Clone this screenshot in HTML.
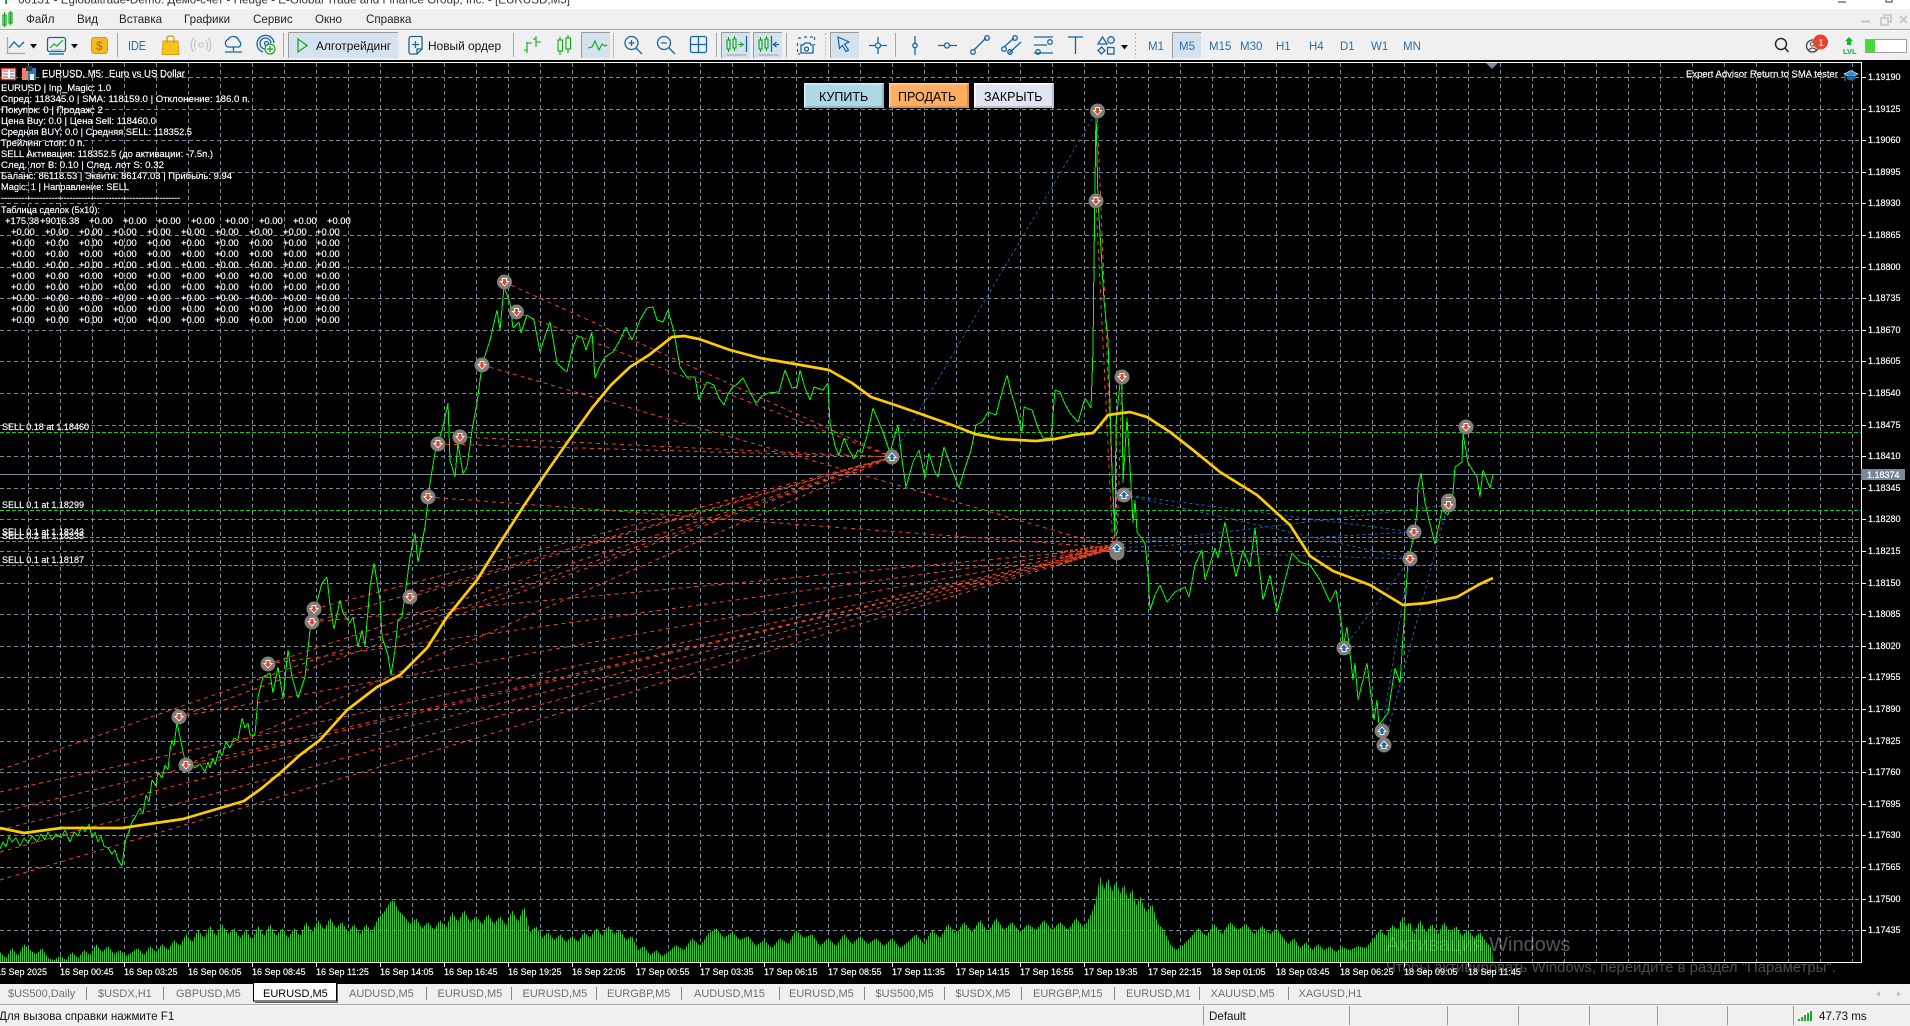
<!DOCTYPE html>
<html><head><meta charset="utf-8"><title>EURUSD,M5</title>
<style>
html,body{margin:0;padding:0;background:#000;width:1910px;height:1026px;overflow:hidden}
svg{display:block;position:absolute;left:0;top:0}
text{font-family:"Liberation Sans","Noto Sans CJK SC",sans-serif;white-space:pre}
.c text,text.c{font-size:9px;fill:#fff;stroke:#fff;stroke-width:.15}
.i{font-size:9.4px;fill:#fff;stroke:#fff;stroke-width:.15}
.t{font-size:11px;fill:#6e6e6e}
.m{font-size:11.6px;fill:#222}
.tf{font-size:11.5px;fill:#2c6fa6}
.ib{fill:none;stroke:#17669f;stroke-width:1.3}
.ig{fill:none;stroke:#0fa31e;stroke-width:1.1}
.sep{stroke:#a8a8a8;stroke-width:1}
</style></head><body>
<svg width="1910" height="1026" viewBox="0 0 1910 1026" xmlns="http://www.w3.org/2000/svg">
<defs>
<pattern id="vb" patternUnits="userSpaceOnUse" x="0" y="0" width="2" height="4"><rect width="1" height="4" fill="#32cd32"/></pattern>
<g id="sm"><circle r="7.5" fill="#847d78"/><path d="M-2-3.500H2V-.5H4L0 4-4-.5H-2Z" fill="#e8432a" stroke="#fff" stroke-width=".9"/></g>
<g id="bm"><circle r="7.5" fill="#847d78"/><path d="M-2 3.500H2V.5H4L0-4-4 .5H-2Z" fill="#0f6cb4" stroke="#fff" stroke-width=".9"/></g>
</defs>

<!-- window chrome -->
<rect x="0" y="0" width="1910" height="9" fill="#fff"/>
<rect x="0" y="9" width="1910" height="51" fill="#f0f0f0"/>
<rect x="0" y="29" width="1910" height="1" fill="#a6a6a6"/>
<rect x="0" y="30" width="1910" height="1" fill="#fafafa"/>
<rect x="0" y="60" width="1910" height="966" fill="#000"/>
<path d="M5 0h2v4H5z" fill="#1fa82f"/>
<text x="18" y="3.500" textLength="552" lengthAdjust="spacingAndGlyphs" style="font-size:12px;fill:#333">60131 - Eglobaltrade-Demo: Демо-счет - Hedge - E-Global Trade and Finance Group, Inc. - [EURUSD,M5]</text>
<path d="M1838 2h8M1886 0v2h6V0" stroke="#333" fill="none"/>

<!-- menu -->
<path d="M3 15h3v10H3zM9 13h3v10H9z" fill="none" stroke="#12a822" stroke-width="1.2"/><path d="M4.500 12v15M10.500 11v14" stroke="#12a822"/>
<g class="mn"><text class="m" x="26" y="23">Файл</text><text class="m" x="77" y="23">Вид</text><text class="m" x="119" y="23">Вставка</text><text class="m" x="184" y="23">Графики</text><text class="m" x="253" y="23">Сервис</text><text class="m" x="315" y="23">Окно</text><text class="m" x="366" y="23">Справка</text></g>
<path d="M1861 21.500h9" stroke="#c4c4c4" stroke-width="2"/><path d="M1881 18h7v7h-7zM1884 18v-3h7v7h-3" fill="none" stroke="#c4c4c4" stroke-width="1.5"/><path d="M1900 16l7 7M1907 16l-7 7" stroke="#c4c4c4" stroke-width="1.6"/>

<!-- toolbar highlights -->
<g fill="#d5e3f0"><rect x="289" y="33" width="109" height="25"/><rect x="582" y="33" width="28" height="25"/><rect x="722" y="33" width="28" height="25"/><rect x="754" y="33" width="28" height="25"/><rect x="831" y="33" width="28" height="25"/><rect x="1173" y="33" width="28" height="25"/></g>
<path d="M288.500 32.500H398M288.500 32.500V58M581.500 32.500H610M581.500 32.500V58M721.500 32.500H750M721.500 32.500V58M753.500 32.500H782M753.500 32.500V58M830.500 32.500H859M830.500 32.500V58M1172.500 32.500H1201M1172.500 32.500V58" stroke="#9c9c9c" fill="none"/>
<g class="sep"><path d="M117.500 33v24M283.500 33v24M513.500 33v24M716.500 33v24M786.500 33v24M895.500 33v24"/><path d="M825.500 33v25M1135.500 33v25" stroke-dasharray="2 2" stroke="#bbb"/><path d="M613.500 33v25" stroke="#bbb"/></g>

<!-- toolbar icons -->
<path d="M7.500 37v16.500H25" fill="none" stroke="#a9a9a9" stroke-width="1.3"/><path d="M9 48l5-6 5 5 5-5" class="ib"/>
<path d="M30 44h7l-3.500 4.500zM71 44h7l-3.500 4.500zM1121 45h7l-3.500 4.500z" fill="#111"/>
<rect x="47.500" y="37.500" width="18" height="14" rx="2" class="ib"/><path d="M50 48l4-4 3 2 6-6" class="ig"/><path d="M49 54h15" class="ib"/><path d="M51 49h11v2H51z" fill="#9ed0ee"/>
<rect x="91.500" y="37.500" width="16" height="16" rx="2.500" fill="#f5b921" stroke="#d29a1a"/><text x="96" y="50" style="font-size:12px;fill:#a76d12">$</text>
<text x="128" y="50" textLength="18" lengthAdjust="spacingAndGlyphs" style="font-size:12.500px;fill:#1f6ea8">IDE</text>
<path d="M163 41h15l1 13.500h-17z" fill="#f4c61d" stroke="#d9a316"/><path d="M167 43v-5q0-2 3.500-2t3.500 2v5" fill="none" stroke="#c99a16" stroke-width="1.2"/>
<g fill="none" stroke="#c4c4c4" stroke-width="1.2"><circle cx="201" cy="45" r="2.200"/><path d="M196 40q-3 5 0 10M206 40q3 5 0 10M193.500 38q-4.500 7 0 14M208.500 38q4.500 7 0 14"/></g>
<path d="M228 47a4 4 0 0 1 0-7.500 6 6 0 0 1 11 1.500 3.500 3.500 0 0 1 0 6zM233.500 47v4M225 52h17" class="ib"/>
<g class="ib"><path d="M263 52a8.500 8.500 0 1 1 11-9M265 49a5.500 5.500 0 1 1 6-6"/><circle cx="266.500" cy="43.500" r="2"/></g><circle cx="270" cy="49" r="5" fill="#e8f4e8" stroke="#1b9f2a" stroke-width="1.200"/><path d="M270 46v6M267 49h6" stroke="#1b9f2a" stroke-width="1.200"/>
<path d="M298 39l9 6.500-9 6.500z" fill="none" stroke="#16a326" stroke-width="1.300"/>
<text class="m" x="316" y="50" style="fill:#111;font-size:11.900px">Алготрейдинг</text>
<path d="M411 36.500h10a1 1 0 0 1 1 1V49l-5 5h-6a2 2 0 0 1-2-2V38.500a2 2 0 0 1 2-2zM417 54v-5h5" class="ib"/><path d="M415.500 41v7M412 44.500h7" class="ib"/>
<text class="m" x="428" y="50" style="fill:#111;font-size:11.900px">Новый ордер</text>
<g class="ig"><path d="M527 53V42M527 43h5M524 50h3M536 47V36M536 42h5M533 39h3"/></g>
<g class="ig"><rect x="558" y="40" width="4.500" height="11"/><rect x="566" y="38" width="4.500" height="11"/><path d="M560 37v3M560 51v4M568 35v3M568 49v4"/></g>
<path d="M588 48l4-1 3-6 4 9 3-6 3 2 2-1" class="ig"/>
<g class="ib"><circle cx="631.500" cy="43" r="6.500"/><path d="M636 48l6 6M628.500 43h6M631.500 40v6"/><circle cx="664" cy="43" r="6.500"/><path d="M669 48l6 6M661 43h6"/></g>
<g class="ib"><rect x="690.500" y="36.500" width="16" height="16" rx="2"/><path d="M698.500 36.500v16M690.500 44.500h16"/></g>
<g class="ig"><rect x="727" y="40" width="3" height="9"/><rect x="733" y="39" width="3" height="9"/><path d="M728.500 37v3M728.500 49v3M734.500 36v3M734.500 48v3M738 44.500h6"/></g><path d="M740 42l3 2.500-3 2.500" fill="none" stroke="#1b9f2a"/><path d="M746.500 36v16" class="ib"/><path d="M727 55h19" stroke="#999"/>
<g class="ig"><rect x="759" y="40" width="3" height="9"/><rect x="765" y="39" width="3" height="9"/><path d="M760.500 37v3M760.500 49v3M766.500 36v3M766.500 48v3"/></g><path d="M771.500 36v16" class="ib"/><path d="M779 44.500h-5M776.500 42l-3 2.500 3 2.500" class="ib"/><path d="M759 55h19" stroke="#999"/>
<path d="M798 38h3M804 37h3M810 37h3M814.500 37v3M797.500 43v3M797.500 49v3M814.500 44v1M798 54h2" stroke="#17669f" stroke-width="1.200" fill="none"/>
<path d="M801 45h2l2-2h5l1 2h2v8h-12z" class="ib"/><circle cx="806.500" cy="49" r="2" class="ib"/>
<path d="M838 37l11 5-4.500 2 4 6-2.500 1.500-3.500-6-3 3z" fill="#d5e3f0" stroke="#17669f" stroke-width="1.200"/>
<g class="ib"><path d="M878 37v6M878 48v6M869 45.500h6M881 45.500h6"/><circle cx="878" cy="45.500" r="2.500"/><path d="M915 36v7M915 48v7M938 45.500h6M950 45.500h7"/><circle cx="915" cy="45.500" r="2.200"/><circle cx="947" cy="45.500" r="2.500"/></g>
<g class="ib"><path d="M974 50l12-12"/><circle cx="973" cy="52" r="2.300"/><circle cx="987" cy="38" r="2.300"/><path d="M1004 47l10-9M1009 53l12-11"/><circle cx="1004" cy="49" r="2.300"/><circle cx="1015" cy="38" r="2.300"/><circle cx="1010" cy="52" r="2.300"/><path d="M1034 37h19M1034 45h13M1034 53h19"/><circle cx="1050" cy="42" r="2.300"/><circle cx="1038" cy="52" r="2.300"/><path d="M1068 37h15M1075.500 37v17"/><path d="M1098 44l4.500-7 4.500 7z"/><circle cx="1111" cy="40" r="3.300"/><rect x="1107.500" y="47.500" width="6.500" height="6.500"/><path d="M1101.500 47l3.500 3.500-3.500 3.500-3.500-3.500z"/></g>
<g class="tf"><text x="1148" y="50">M1</text><text x="1179" y="50">M5</text><text x="1209" y="50">M15</text><text x="1240" y="50">M30</text><text x="1276" y="50">H1</text><text x="1309" y="50">H4</text><text x="1340" y="50">D1</text><text x="1371" y="50">W1</text><text x="1403" y="50">MN</text></g>
<circle cx="1781" cy="44" r="5.500" fill="none" stroke="#222" stroke-width="1.400"/><path d="M1785 48l3.500 4" stroke="#222" stroke-width="1.400"/>
<circle cx="1812.500" cy="46" r="6" fill="none" stroke="#444" stroke-width="1.300"/><circle cx="1812.500" cy="44" r="2" fill="none" stroke="#444"/><path d="M1808.500 50q4-4 8 0" fill="none" stroke="#444"/>
<circle cx="1820.500" cy="42" r="7.500" fill="#e5432e"/><text x="1818" y="46" style="font-size:10.500px;fill:#fff">1</text>
<path d="M1849 37l4 4h-2v4h-4v-4h-2z" fill="#19b82c"/><text x="1843" y="54" style="font-size:7.500px;font-weight:bold;fill:#19a82a">LVL</text>
<rect x="1865.500" y="39.500" width="41" height="13" fill="#fff" stroke="#a0a0a0"/><rect x="1866" y="40" width="9" height="12" fill="#46d937"/>

<!-- chart grid -->
<g stroke="#778899" stroke-width="1" stroke-dasharray="4 3" shape-rendering="crispEdges" fill="none">
<path d="M28.500 63V962M60.500 63V962M92.500 63V962M124.500 63V962M156.500 63V962M188.500 63V962M220.500 63V962M252.500 63V962M284.500 63V962M316.500 63V962M348.500 63V962M380.500 63V962M412.500 63V962M444.500 63V962M476.500 63V962M508.500 63V962M540.500 63V962M572.500 63V962M604.500 63V962M636.500 63V962M668.500 63V962M700.500 63V962M732.500 63V962M764.500 63V962M796.500 63V962M828.500 63V962M860.500 63V962M892.500 63V962M924.500 63V962M956.500 63V962M988.500 63V962M1020.500 63V962M1052.500 63V962M1084.500 63V962M1116.500 63V962M1148.500 63V962M1180.500 63V962M1212.500 63V962M1244.500 63V962M1276.500 63V962M1308.500 63V962M1340.500 63V962M1372.500 63V962M1404.500 63V962M1436.500 63V962M1468.500 63V962M1500.500 63V962M1532.500 63V962M1564.500 63V962M1596.500 63V962M1628.500 63V962M1660.500 63V962M1692.500 63V962M1724.500 63V962M1756.500 63V962M1788.500 63V962M1820.500 63V962M1852.500 63V962"/>
<path d="M0 77.500H1861M0 109.500H1861M0 140.500H1861M0 172.500H1861M0 203.500H1861M0 235.500H1861M0 267.500H1861M0 298.500H1861M0 330.500H1861M0 361.500H1861M0 393.500H1861M0 425.500H1861M0 456.500H1861M0 488.500H1861M0 519.500H1861M0 551.500H1861M0 583.500H1861M0 614.500H1861M0 646.500H1861M0 677.500H1861M0 709.500H1861M0 741.500H1861M0 772.500H1861M0 804.500H1861M0 835.500H1861M0 867.500H1861M0 899.500H1861M0 930.500H1861"/>
</g>

<!-- volumes -->
<polygon fill="url(#vb)" points="0,962 0,952 6,958 12,948 18,956 24,944 30,950 36,954 42,948 48,958 54,960 60,956 66,960 72,952 78,958 84,950 90,955 96,944 102,952 108,946 114,954 120,950 126,956 132,952 138,948 144,955 150,946 156,952 162,944 168,950 174,940 180,946 186,934 192,942 198,930 204,938 210,926 216,936 222,924 228,934 234,928 240,938 246,930 252,940 258,926 264,936 270,924 276,936 282,928 288,938 294,928 300,936 306,922 312,932 318,920 324,930 330,918 336,928 342,922 348,932 354,924 360,934 366,924 372,932 378,918 384,912 390,902 394,900 398,910 404,916 410,924 416,918 422,928 428,922 434,930 440,920 446,928 452,912 458,922 464,910 470,922 476,916 482,924 488,914 494,924 500,916 506,926 512,910 518,922 524,906 530,932 536,926 542,938 548,932 554,940 560,934 566,942 572,936 578,942 584,932 590,938 596,928 602,936 608,926 614,934 620,930 626,940 632,936 638,950 644,946 650,955 656,950 662,956 668,952 676,945 684,950 692,938 700,946 708,934 716,928 724,938 732,932 740,940 748,936 756,946 764,940 772,948 780,938 788,944 796,930 804,938 812,934 820,946 828,938 836,946 844,934 852,944 860,936 868,944 876,938 884,946 892,938 900,948 908,942 916,934 924,944 932,930 940,938 948,924 956,934 964,922 972,932 980,920 988,932 996,918 1004,930 1012,922 1020,932 1028,924 1036,930 1044,920 1052,930 1060,922 1068,930 1076,918 1084,928 1092,912 1096,900 1100,876 1104,890 1108,878 1112,892 1116,880 1120,894 1124,884 1128,900 1132,888 1136,906 1140,896 1146,912 1152,904 1158,924 1164,930 1170,944 1176,950 1182,946 1190,938 1198,928 1206,936 1214,924 1222,934 1230,922 1238,930 1246,924 1254,934 1262,926 1270,934 1276,928 1282,936 1288,944 1294,938 1300,948 1306,942 1312,950 1318,944 1324,950 1330,946 1336,952 1342,947 1350,950 1358,946 1366,948 1374,938 1380,930 1386,936 1392,925 1398,930 1402,916 1406,926 1410,922 1414,934 1420,920 1426,932 1432,924 1438,934 1444,922 1450,932 1456,926 1462,936 1468,929 1474,938 1480,932 1486,942 1492,948 1493,962"/>

<!-- bid + deal lines -->
<path d="M0 474.500H1861" stroke="#778899" shape-rendering="crispEdges"/>
<g stroke="#22c822" stroke-dasharray="4 2" shape-rendering="crispEdges"><path d="M0 432.500H1861M0 510.500H1861M0 537.500H1861M0 541.500H1861M0 565.500H1861"/></g>

<g fill="none" stroke="#e8401f" stroke-width="1" stroke-dasharray="4 4" shape-rendering="crispEdges">
<path d="M0 770L892 457M178 717L892 457M186 765L892 457M268 664L892 457M312 622L892 457M314 609L892 457M410 597L892 457M438 444L892 457M460 437L892 457M504 282L892 457M516 312L892 457"/>
<path d="M482 365L1115 548M428 497L1115 548M0 792L1115 548M0 812L1115 548M0 830L1115 548M0 852L1115 548M0 880L1115 548M178 717L1115 548M186 765L1115 548M268 664L1115 548M312 622L1115 548"/>
<path d="M1097 111L1115 548M1096 201L1113 548M1122 377L1117 548"/>
</g>
<path d="M1060 558L1115 546M1060 564L1115 548M1060 552L1115 545" stroke="#e8401f" stroke-width="2" stroke-dasharray="3 2" fill="none"/>
<g fill="none" stroke="#0f5fa8" stroke-width="1" stroke-dasharray="3 3" shape-rendering="crispEdges">
<path d="M892 457L1097 111M1124 495L1410 559M1117 548L1414 532M1117 545L1448 505M1117 550L1410 559M1344 648L1410 559M1382 731L1414 532M1384 745L1448 504M1124 495L1414 532"/>
</g>

<!-- price line -->
<polyline fill="none" stroke="#00ff00" stroke-width="1" stroke-linejoin="bevel" shape-rendering="crispEdges" points="0,849 3,842 6,847 9,836 12,842 16,838 20,846 24,838 28,843 32,836 37,842 41,834 45,840 48,832 52,840 56,834 61,838 65,830 70,842 74,832 78,836 82,826 85,832 89,824 92,838 95,832 98,842 101,836 104,846 108,848 112,854 115,850 118,860 122,866 125,842 128,834 132,822 136,816 140,808 143,814 146,795 149,802 152,780 156,786 158,772 162,778 165,765 168,770 170,750 172,740 174,746 177,722 179,732 181,742 184,756 186,765 190,762 195,768 200,764 205,772 208,762 210,768 213,758 215,765 219,750 222,756 226,742 230,748 234,738 238,740 242,718 245,728 248,723 250,735 255,735 258,697 263,677 270,673 273,693 278,667 283,698 288,650 292,677 298,698 305,677 310,630 316,605 322,583 327,577 330,605 334,629 340,600 343,613 350,623 353,617 358,647 362,630 365,646 370,587 374,563 380,600 382,637 388,655 391,675 395,650 398,620 402,617 410,557 415,533 418,562 425,527 430,483 435,453 443,427 448,403 450,460 455,477 458,443 463,474 467,467 472,430 477,403 482,365 490,340 497,310 500,330 504,287 510,303 513,328 519,322 521,333 527,315 534,320 540,352 545,336 550,322 554,344 557,363 562,368 567,372 572,350 577,337 582,337 586,350 592,332 595,378 600,366 605,357 613,352 620,340 626,327 632,340 636,330 640,320 647,308 653,307 657,320 663,322 668,310 674,332 680,367 687,377 695,377 699,400 703,390 707,382 714,385 719,398 724,405 728,394 732,388 737,384 743,378 750,392 756,403 762,396 768,393 779,392 785,370 792,388 797,387 800,370 805,388 810,400 814,387 823,390 828,383 830,423 835,446 839,455 844,438 849,450 854,459 858,450 862,453 868,432 873,408 878,420 883,432 890,453 894,438 898,425 902,460 906,487 913,462 919,450 925,478 929,453 934,470 938,477 944,447 952,470 959,488 965,468 971,450 976,425 982,422 988,412 996,415 1002,392 1007,375 1011,392 1015,405 1022,432 1024,407 1032,410 1038,428 1043,438 1051,438 1055,390 1060,392 1065,404 1070,413 1078,422 1085,398 1091,408 1093,350 1094,260 1096,112 1098,200 1104,300 1108,340 1112,470 1115,537 1116,423 1120,383 1122,377 1123,483 1127,418 1130,467 1133,523 1135,500 1137,532 1145,543 1148,573 1150,610 1155,595 1160,585 1164,595 1167,602 1175,592 1185,587 1189,597 1195,565 1202,550 1205,580 1215,548 1218,558 1225,522 1231,552 1236,577 1243,550 1250,567 1255,528 1263,600 1270,575 1277,612 1285,580 1292,553 1300,562 1310,565 1320,580 1330,602 1336,590 1342,627 1343,648 1347,627 1353,680 1355,663 1358,700 1367,663 1374,720 1377,700 1379,725 1388,713 1395,668 1400,683 1405,607 1408,560 1413,540 1417,513 1418,487 1421,473 1425,503 1435,544 1442,510 1448,515 1453,493 1455,467 1462,462 1463,433 1468,463 1477,477 1480,497 1483,470 1490,488 1493,475"/>

<!-- SMA -->
<polyline fill="none" stroke="#ffcc00" stroke-width="2.700" stroke-linejoin="round" points="0,828 24,833 61,828 122,828 183,819 244,801 262,788 280,773 300,755 320,740 347,710 377,687 400,675 427,648 447,617 477,580 500,543 523,507 546,473 569,440 592,408 611,385 630,367 649,355 672,337 684,336 699,339 730,350 760,358 795,364 829,370 852,383 871,397 898,406 921,414 952,425 975,434 1001,439 1036,441 1055,439 1074,435 1093,433 1100,425 1108,415 1130,412 1147,417 1170,432 1193,450 1220,472 1257,495 1290,525 1310,556 1333,571 1370,585 1403,605 1427,603 1457,597 1480,584 1493,578"/>

<!-- markers -->
<use href="#sm" x="179" y="717"/><use href="#sm" x="186" y="765"/><use href="#sm" x="268" y="664"/><use href="#sm" x="314" y="609"/><use href="#sm" x="312" y="622"/><use href="#sm" x="410" y="597"/><use href="#sm" x="428" y="497"/><use href="#sm" x="438" y="444"/><use href="#sm" x="460" y="437"/><use href="#sm" x="482" y="365"/><use href="#sm" x="504.500" y="282"/><use href="#sm" x="516.500" y="312"/><use href="#sm" x="1097.500" y="111"/><use href="#sm" x="1096" y="201"/><use href="#sm" x="1122" y="377"/><use href="#sm" x="1414" y="532"/><use href="#sm" x="1410" y="559"/><use href="#sm" x="1448.500" y="501"/><use href="#sm" x="1448.500" y="505"/><use href="#sm" x="1466" y="427"/>
<use href="#bm" x="892" y="457"/><use href="#bm" x="1124" y="495"/><circle cx="1117" cy="553" r="7.500" fill="#847d78"/><use href="#bm" x="1117" y="548"/><use href="#bm" x="1344" y="648"/><use href="#bm" x="1382" y="731"/><use href="#bm" x="1384" y="745"/>

<!-- chart frame -->
<path d="M0 62.500H1861.500V962.500H0" fill="none" stroke="#fff" shape-rendering="crispEdges"/>
<path d="M1486 63h12l-6 6z" fill="#778899"/>

<!-- header icons -->
<rect x="1.500" y="68.500" width="14" height="11" fill="#fff" stroke="#e5332e" stroke-width="1.500"/><path d="M3 71h5M3 74h5M3 77h5" stroke="#e5332e"/><path d="M10 71h4M10 74h4M10 77h4" stroke="#2460a8"/>
<path d="M22 68h6v12h-6z" fill="#f0806c"/><path d="M28 68h8v12h-8z" fill="#1f7fc4"/><path d="M26 66h6v5h-6z" fill="#333"/><path d="M30 74h4v6h-4z" fill="#fff"/>
<text class="i" x="42" y="77" textLength="143" lengthAdjust="spacingAndGlyphs" style="font-size:9.800px">EURUSD, M5:  Euro vs US Dollar</text>
<text class="i" x="1686" y="77" textLength="152" lengthAdjust="spacingAndGlyphs" style="font-size:9.400px">Expert Advisor Return to SMA tester</text>
<path d="M1844 74l7-3.500 7 3.500-7 3.500z" fill="#2f8fd0" stroke="#bfe0f5" stroke-width=".7"/><path d="M1847 76v3q4 3 8 0v-3" fill="#1869a8"/><path d="M1845 75v6" stroke="#2f8fd0"/>

<!-- info -->
<g class="i">
<text class="i" x="1" y="91" textLength="110" lengthAdjust="spacingAndGlyphs">EURUSD | Inp_Magic: 1.0</text>
<text class="i" x="1" y="102" textLength="249" lengthAdjust="spacingAndGlyphs">Спред: 118345.0 | SMA: 118159.0 | Отклонение: 186.0 п.</text>
<text class="i" x="1" y="113" textLength="102" lengthAdjust="spacingAndGlyphs">Покупок: 0 | Продаж: 2</text>
<text class="i" x="1" y="124" textLength="155" lengthAdjust="spacingAndGlyphs">Цена Buy: 0.0 | Цена Sell: 118460.0</text>
<text class="i" x="1" y="135" textLength="191" lengthAdjust="spacingAndGlyphs">Средняя BUY: 0.0 | Средняя SELL: 118352.5</text>
<text class="i" x="1" y="146" textLength="84" lengthAdjust="spacingAndGlyphs">Трейлинг стоп: 0 п.</text>
<text class="i" x="1" y="157" textLength="212" lengthAdjust="spacingAndGlyphs">SELL Активация: 118352.5 (до активации: -7.5п.)</text>
<text class="i" x="1" y="168" textLength="163" lengthAdjust="spacingAndGlyphs">След. лот B: 0.10 | След. лот S: 0.32</text>
<text class="i" x="1" y="179" textLength="231" lengthAdjust="spacingAndGlyphs">Баланс: 86118.53 | Эквити: 86147.03 | Прибыль: 9.94</text>
<text class="i" x="1" y="190" textLength="128" lengthAdjust="spacingAndGlyphs">Magic: 1 | Направление: SELL</text>
<text class="i" x="1" y="201" textLength="179" lengthAdjust="spacingAndGlyphs">------------------------------------------------------------</text>
<text class="i" x="1" y="213" textLength="99" lengthAdjust="spacingAndGlyphs">Таблица сделок (5x10):</text>
<text class="i" y="224"><tspan x="5">+175.38</tspan><tspan x="40">+9016.38</tspan><tspan x="89">+0.00</tspan><tspan x="123">+0.00</tspan><tspan x="157">+0.00</tspan><tspan x="191">+0.00</tspan><tspan x="225">+0.00</tspan><tspan x="259">+0.00</tspan><tspan x="293">+0.00</tspan><tspan x="327">+0.00</tspan></text>
<text class="i" y="235"><tspan x="11">+0.00</tspan><tspan x="45">+0.00</tspan><tspan x="79">+0.00</tspan><tspan x="113">+0.00</tspan><tspan x="147">+0.00</tspan><tspan x="181">+0.00</tspan><tspan x="215">+0.00</tspan><tspan x="249">+0.00</tspan><tspan x="283">+0.00</tspan><tspan x="316">+0.00</tspan></text>
<text class="i" y="246"><tspan x="11">+0.00</tspan><tspan x="45">+0.00</tspan><tspan x="79">+0.00</tspan><tspan x="113">+0.00</tspan><tspan x="147">+0.00</tspan><tspan x="181">+0.00</tspan><tspan x="215">+0.00</tspan><tspan x="249">+0.00</tspan><tspan x="283">+0.00</tspan><tspan x="316">+0.00</tspan></text>
<text class="i" y="257"><tspan x="11">+0.00</tspan><tspan x="45">+0.00</tspan><tspan x="79">+0.00</tspan><tspan x="113">+0.00</tspan><tspan x="147">+0.00</tspan><tspan x="181">+0.00</tspan><tspan x="215">+0.00</tspan><tspan x="249">+0.00</tspan><tspan x="283">+0.00</tspan><tspan x="316">+0.00</tspan></text>
<text class="i" y="268"><tspan x="11">+0.00</tspan><tspan x="45">+0.00</tspan><tspan x="79">+0.00</tspan><tspan x="113">+0.00</tspan><tspan x="147">+0.00</tspan><tspan x="181">+0.00</tspan><tspan x="215">+0.00</tspan><tspan x="249">+0.00</tspan><tspan x="283">+0.00</tspan><tspan x="316">+0.00</tspan></text>
<text class="i" y="279"><tspan x="11">+0.00</tspan><tspan x="45">+0.00</tspan><tspan x="79">+0.00</tspan><tspan x="113">+0.00</tspan><tspan x="147">+0.00</tspan><tspan x="181">+0.00</tspan><tspan x="215">+0.00</tspan><tspan x="249">+0.00</tspan><tspan x="283">+0.00</tspan><tspan x="316">+0.00</tspan></text>
<text class="i" y="290"><tspan x="11">+0.00</tspan><tspan x="45">+0.00</tspan><tspan x="79">+0.00</tspan><tspan x="113">+0.00</tspan><tspan x="147">+0.00</tspan><tspan x="181">+0.00</tspan><tspan x="215">+0.00</tspan><tspan x="249">+0.00</tspan><tspan x="283">+0.00</tspan><tspan x="316">+0.00</tspan></text>
<text class="i" y="301"><tspan x="11">+0.00</tspan><tspan x="45">+0.00</tspan><tspan x="79">+0.00</tspan><tspan x="113">+0.00</tspan><tspan x="147">+0.00</tspan><tspan x="181">+0.00</tspan><tspan x="215">+0.00</tspan><tspan x="249">+0.00</tspan><tspan x="283">+0.00</tspan><tspan x="316">+0.00</tspan></text>
<text class="i" y="312"><tspan x="11">+0.00</tspan><tspan x="45">+0.00</tspan><tspan x="79">+0.00</tspan><tspan x="113">+0.00</tspan><tspan x="147">+0.00</tspan><tspan x="181">+0.00</tspan><tspan x="215">+0.00</tspan><tspan x="249">+0.00</tspan><tspan x="283">+0.00</tspan><tspan x="316">+0.00</tspan></text>
<text class="i" y="323"><tspan x="11">+0.00</tspan><tspan x="45">+0.00</tspan><tspan x="79">+0.00</tspan><tspan x="113">+0.00</tspan><tspan x="147">+0.00</tspan><tspan x="181">+0.00</tspan><tspan x="215">+0.00</tspan><tspan x="249">+0.00</tspan><tspan x="283">+0.00</tspan><tspan x="316">+0.00</tspan></text>
</g>

<!-- deal labels -->
<text class="i" x="2" y="430" textLength="87" lengthAdjust="spacingAndGlyphs">SELL 0.18 at 1.18460</text>
<text class="i" x="2" y="508" textLength="82" lengthAdjust="spacingAndGlyphs">SELL 0.1 at 1.18299</text>
<text class="i" x="2" y="535" textLength="82" lengthAdjust="spacingAndGlyphs">SELL 0.1 at 1.18243</text>
<text class="i" x="2" y="539" textLength="82" lengthAdjust="spacingAndGlyphs">SELL 0.2 at 1.18235</text>
<text class="i" x="2" y="563" textLength="82" lengthAdjust="spacingAndGlyphs">SELL 0.1 at 1.18187</text>

<!-- buttons -->
<g>
<rect x="804" y="83" width="80" height="25" fill="#8fb8c6"/><path d="M804 83h79v1.500H805.500V107H804z" fill="#d4eef6"/><rect x="805.500" y="84.500" width="76.500" height="21.500" fill="#add8e6"/>
<text x="819" y="101" style="font-size:12.500px;fill:#000">КУПИТЬ</text>
<rect x="889" y="83" width="80" height="25" fill="#d9924a"/><path d="M889 83h79v1.500H890.500V107H889z" fill="#ffd09a"/><rect x="890.500" y="84.500" width="76.500" height="21.500" fill="#ffad60"/>
<text x="898" y="101" style="font-size:12.500px;fill:#000">ПРОДАТЬ</text>
<rect x="974" y="83" width="80" height="25" fill="#b8c2cc"/><path d="M974 83h79v1.500H975.500V107H974z" fill="#fff"/><rect x="975.500" y="84.500" width="76.500" height="21.500" fill="#dde6f0"/>
<text x="984" y="101" style="font-size:12.500px;fill:#000">ЗАКРЫТЬ</text>
</g>

<!-- price axis -->
<g class="c">
<path d="M1861 77.500h5M1861 109.500h5M1861 140.500h5M1861 172.500h5M1861 203.500h5M1861 235.500h5M1861 267.500h5M1861 298.500h5M1861 330.500h5M1861 361.500h5M1861 393.500h5M1861 425.500h5M1861 456.500h5M1861 488.500h5M1861 519.500h5M1861 551.500h5M1861 583.500h5M1861 614.500h5M1861 646.500h5M1861 677.500h5M1861 709.500h5M1861 741.500h5M1861 772.500h5M1861 804.500h5M1861 835.500h5M1861 867.500h5M1861 899.500h5M1861 930.500h5" stroke="#fff"/>
<text x="1868" y="80">1.19190</text><text x="1868" y="112">1.19125</text><text x="1868" y="143">1.19060</text><text x="1868" y="175">1.18995</text><text x="1868" y="206">1.18930</text><text x="1868" y="238">1.18865</text><text x="1868" y="270">1.18800</text><text x="1868" y="301">1.18735</text><text x="1868" y="333">1.18670</text><text x="1868" y="364">1.18605</text><text x="1868" y="396">1.18540</text><text x="1868" y="428">1.18475</text><text x="1868" y="459">1.18410</text><text x="1868" y="491">1.18345</text><text x="1868" y="522">1.18280</text><text x="1868" y="554">1.18215</text><text x="1868" y="586">1.18150</text><text x="1868" y="617">1.18085</text><text x="1868" y="649">1.18020</text><text x="1868" y="680">1.17955</text><text x="1868" y="712">1.17890</text><text x="1868" y="744">1.17825</text><text x="1868" y="775">1.17760</text><text x="1868" y="807">1.17695</text><text x="1868" y="838">1.17630</text><text x="1868" y="870">1.17565</text><text x="1868" y="902">1.17500</text><text x="1868" y="933">1.17435</text>
<path d="M1861 469h44v11h-44z" fill="#778899"/><text x="1867" y="478">1.18374</text>
</g>

<!-- time axis -->
<g class="c">
<path d="M60.500 962v5M124.500 962v5M188.500 962v5M252.500 962v5M316.500 962v5M380.500 962v5M444.500 962v5M508.500 962v5M572.500 962v5M636.500 962v5M700.500 962v5M764.500 962v5M828.500 962v5M892.500 962v5M956.500 962v5M1020.500 962v5M1084.500 962v5M1148.500 962v5M1212.500 962v5M1276.500 962v5M1340.500 962v5M1404.500 962v5M1468.500 962v5" stroke="#fff"/>
<text x="-4" y="975">15 Sep 2025</text><text x="60" y="975">16 Sep 00:45</text><text x="124" y="975">16 Sep 03:25</text><text x="188" y="975">16 Sep 06:05</text><text x="252" y="975">16 Sep 08:45</text><text x="316" y="975">16 Sep 11:25</text><text x="380" y="975">16 Sep 14:05</text><text x="444" y="975">16 Sep 16:45</text><text x="508" y="975">16 Sep 19:25</text><text x="572" y="975">16 Sep 22:05</text><text x="636" y="975">17 Sep 00:55</text><text x="700" y="975">17 Sep 03:35</text><text x="764" y="975">17 Sep 06:15</text><text x="828" y="975">17 Sep 08:55</text><text x="892" y="975">17 Sep 11:35</text><text x="956" y="975">17 Sep 14:15</text><text x="1020" y="975">17 Sep 16:55</text><text x="1084" y="975">17 Sep 19:35</text><text x="1148" y="975">17 Sep 22:15</text><text x="1212" y="975">18 Sep 01:05</text><text x="1276" y="975">18 Sep 03:45</text><text x="1340" y="975">18 Sep 06:25</text><text x="1404" y="975">18 Sep 09:05</text><text x="1468" y="975">18 Sep 11:45</text>
</g>

<!-- tab bar + status -->
<rect x="0" y="984" width="1910" height="42" fill="#f0f0f0"/>
<rect x="0" y="1004" width="1910" height="1" fill="#a6a6a6"/><rect x="0" y="1005" width="1910" height="1" fill="#fafafa"/>
<rect x="253.500" y="982.500" width="83" height="18.500" fill="#fff" stroke="#000"/><path d="M337.500 984v18.500H255" stroke="#666" fill="none"/>
<g stroke="#8a8a8a"><path d="M86.500 987v13M163.500 987v13M426.500 987v13M511.500 987v13M596.500 987v13M681.500 987v13M779.500 987v13M864.500 987v13M944.500 987v13M1021.500 987v13M1114.500 987v13M1199.500 987v13M1288.500 987v13"/></g>
<text class="t" x="8" y="997">$US500,Daily</text><text class="t" x="98" y="997">$USDX,H1</text><text class="t" x="176" y="997">GBPUSD,M5</text><text class="t" x="263" y="997" style="fill:#000">EURUSD,M5</text><text class="t" x="349" y="997">AUDUSD,M5</text><text class="t" x="437.500" y="997">EURUSD,M5</text><text class="t" x="522.500" y="997">EURUSD,M5</text><text class="t" x="607" y="997">EURGBP,M5</text><text class="t" x="694" y="997">AUDUSD,M15</text><text class="t" x="789" y="997">EURUSD,M5</text><text class="t" x="875.500" y="997">$US500,M5</text><text class="t" x="955.500" y="997">$USDX,M5</text><text class="t" x="1033" y="997">EURGBP,M15</text><text class="t" x="1126" y="997">EURUSD,M1</text><text class="t" x="1210.500" y="997">XAUUSD,M5</text><text class="t" x="1298.500" y="997">XAGUSD,H1</text>
<path d="M1880 991l-4 3 4 3zM1897 991l4 3-4 3z" fill="#c4c4c4"/>
<text x="-1" y="1020" style="font-size:11.600px;fill:#111">Для вызова справки нажмите F1</text>
<g stroke="#9a9a9a"><path d="M1203.500 1006v19M1349.500 1006v19M1447.500 1006v19M1518.500 1006v19M1589.500 1006v19M1657.500 1006v19M1727.500 1006v19M1793.500 1006v19"/></g>
<text x="1209" y="1020" style="font-size:11.600px;fill:#111">Default</text>
<path d="M1799 1021v-2M1802 1021v-4M1805 1021v-6M1808 1021v-8M1811 1021v-10" stroke="#1faa2e" stroke-width="2"/>
<text x="1819" y="1020" style="font-size:11.600px;fill:#111">47.73 ms</text>

<!-- activation watermark -->
<text x="1386" y="951" style="font-size:20px;fill:#fff;fill-opacity:.33">Активация Windows</text>
<text x="1386" y="972" style="font-size:14.900px;fill:#fff;fill-opacity:.3">Чтобы активировать Windows, перейдите в раздел "Параметры".</text>
</svg>
</body></html>
